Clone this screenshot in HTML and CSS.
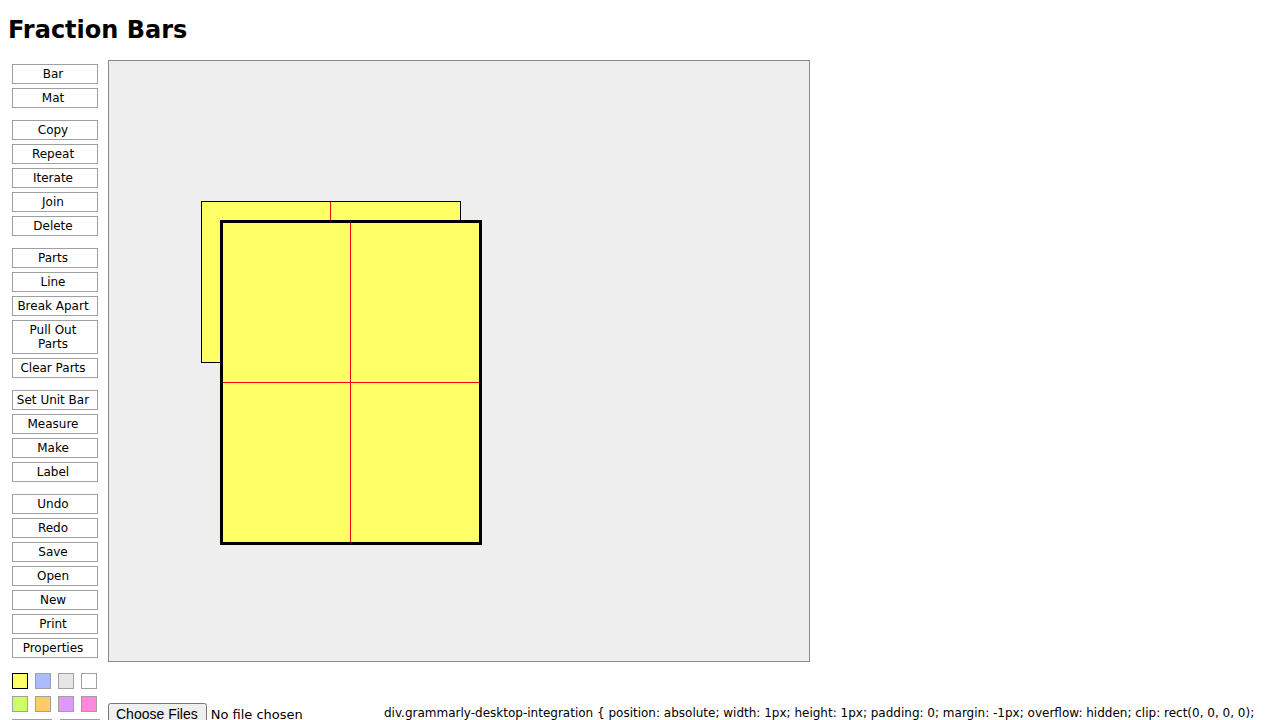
FILE: index.html
```html
<!DOCTYPE html>
<html>
<head>
<meta charset="utf-8">
<title>Fraction Bars</title>
<link rel="stylesheet" href="styles.css">
</head>
<body>
<h1 class="title">Fraction Bars</h1>
<div class="app">
  <div class="tools">
    <div class="group">
      <button class="tool">Bar</button>
      <button class="tool">Mat</button>
    </div>
    <div class="group">
      <button class="tool">Copy</button>
      <button class="tool">Repeat</button>
      <button class="tool">Iterate</button>
      <button class="tool">Join</button>
      <button class="tool">Delete</button>
    </div>
    <div class="group">
      <button class="tool">Parts</button>
      <button class="tool">Line</button>
      <button class="tool">Break Apart</button>
      <button class="tool">Pull Out Parts</button>
      <button class="tool">Clear Parts</button>
    </div>
    <div class="group">
      <button class="tool">Set Unit Bar</button>
      <button class="tool">Measure</button>
      <button class="tool">Make</button>
      <button class="tool">Label</button>
    </div>
    <div class="group">
      <button class="tool">Undo</button>
      <button class="tool">Redo</button>
      <button class="tool">Save</button>
      <button class="tool">Open</button>
      <button class="tool">New</button>
      <button class="tool">Print</button>
      <button class="tool">Properties</button>
    </div>
    <div class="swatches">
      <span class="swatch selected c-yellow"></span>
      <span class="swatch c-blue"></span>
      <span class="swatch c-gray"></span>
      <span class="swatch c-white"></span>
      <span class="swatch c-green"></span>
      <span class="swatch c-orange"></span>
      <span class="swatch c-purple"></span>
      <span class="swatch c-pink"></span>
    </div>
    <div class="extra">
      <span class="extra-box"></span>
      <span class="extra-box"></span>
    </div>
  </div>
  <div class="main">
    <div class="canvas">
      <div class="bar bar-back">
        <span class="vline vline-back"></span>
      </div>
      <div class="bar bar-front">
        <span class="vline vline-front"></span>
        <span class="hline hline-front"></span>
      </div>
    </div>
    <div class="footer">
      <input class="file" type="file" multiple>
      <span class="css-leak">div.grammarly-desktop-integration { position: absolute; width: 1px; height: 1px; padding: 0; margin: -1px; overflow: hidden; clip: rect(0, 0, 0, 0);</span>
    </div>
  </div>
</div>
</body>
</html>
```
FILE: styles.css
```css
html, body {
  margin: 0;
  padding: 0;
  background: #ffffff;
}
body {
  margin: 8px;
  font-family: "DejaVu Sans", sans-serif;
  color: #000;
  overflow: hidden;
}
.title {
  font-family: "DejaVu Sans", sans-serif;
  font-weight: bold;
  font-size: 24px;
  line-height: 28px;
  margin: 8px 0 16px 0;
}
.app {
  display: flex;
  align-items: flex-start;
}
.tools {
  width: 96px;
  padding: 4px 0 0 4px;
  display: flex;
  flex-direction: column;
}
.group {
  display: flex;
  flex-direction: column;
  gap: 4px;
  margin-bottom: 12px;
}
.tool {
  width: 86px;
  margin: 0;
  padding: 2px 6px 2px 2px;
  border: 1px solid #a0a0a0;
  background: #ffffff;
  font-family: "DejaVu Sans", sans-serif;
  font-size: 12px;
  line-height: 14px;
  color: #000;
  text-align: center;
}
.swatches {
  margin-top: 3px;
  display: grid;
  grid-template-columns: repeat(4, 16px);
  column-gap: 7px;
  row-gap: 7px;
}
.swatch {
  display: block;
  width: 14px;
  height: 14px;
  border: 1px solid #a0a0a0;
}
.swatch.selected {
  border-color: #000;
}
.c-yellow { background: #ffff66; }
.c-blue { background: #aabbff; }
.c-gray { background: #e6e6e6; }
.c-white { background: #ffffff; }
.c-green { background: #ccff66; }
.c-orange { background: #ffcc66; }
.c-purple { background: #dd99ff; }
.c-pink { background: #ff88dd; }
.extra {
  margin-top: 7px;
  display: flex;
  gap: 8px;
}
.extra-box {
  display: block;
  width: 38px;
  height: 18px;
  border: 1px solid #a0a0a0;
}
.main {
  display: flex;
  flex-direction: column;
}
.canvas {
  position: relative;
  width: 700px;
  height: 600px;
  border: 1px solid #888888;
  background: #eeeeee;
}
.bar {
  position: absolute;
  background: #ffff66;
  box-sizing: border-box;
}
.bar-back {
  left: 92px;
  top: 140px;
  width: 260px;
  height: 162px;
  border: 1px solid #000;
}
.bar-front {
  left: 111px;
  top: 159px;
  width: 262px;
  height: 325px;
  border: 3px solid #000;
}
.vline {
  position: absolute;
  top: 0;
  bottom: 0;
  width: 1px;
  background: #ff0000;
}
.vline-back { left: 128px; }
.vline-front { left: 127px; }
.hline {
  position: absolute;
  left: 0;
  right: 0;
  height: 1px;
  background: #ff0000;
}
.hline-front { top: 159px; }
.footer {
  margin-top: 41px;
  display: flex;
  align-items: flex-start;
  white-space: nowrap;
}
.file {
  font-family: "DejaVu Sans", sans-serif;
  font-size: 13px;
  margin: 0;
  width: 206px;
}
.file::file-selector-button {
  font-size: 14px;
  padding: 1px 7px 1px 6px;
  margin-right: 4px;
}
.css-leak {
  margin-left: 70px;
  margin-top: 3px;
  font-family: "DejaVu Sans", sans-serif;
  font-size: 12px;
  line-height: 14px;
}
```
